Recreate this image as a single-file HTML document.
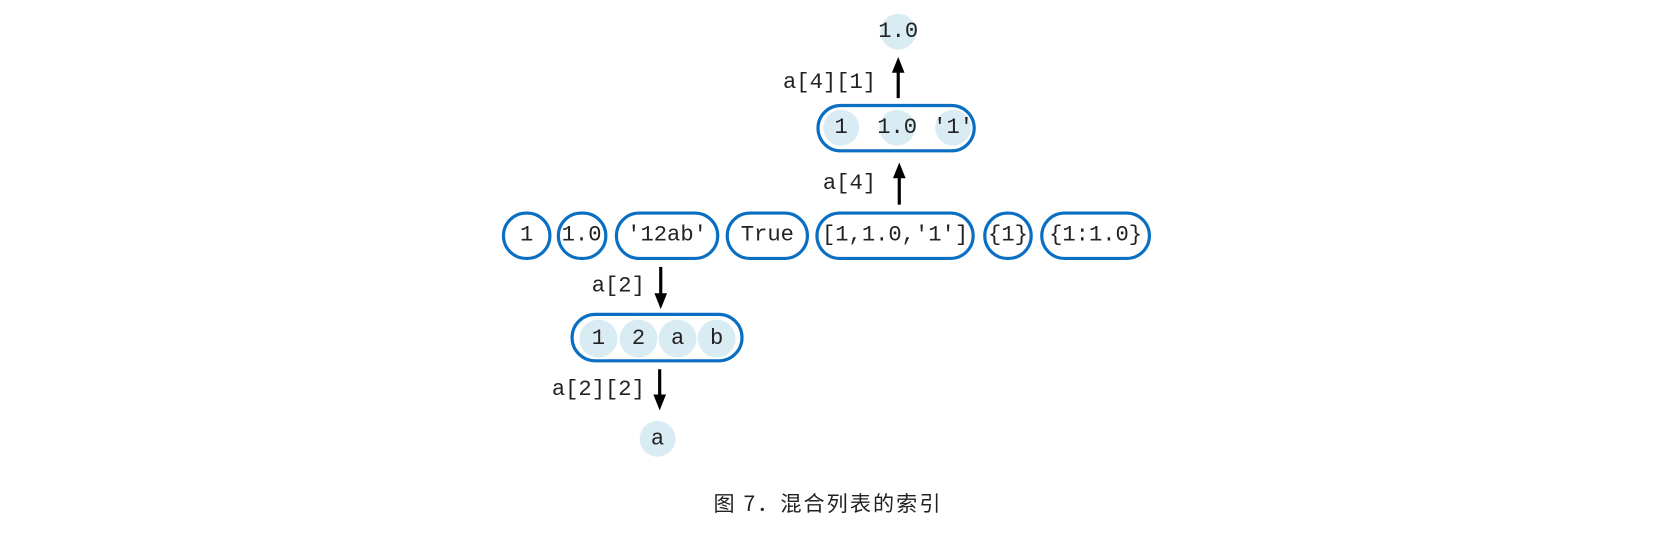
<!DOCTYPE html>
<html><head><meta charset="utf-8"><style>
html,body{margin:0;padding:0;background:#fff;width:1655px;height:538px;overflow:hidden}
svg{display:block}
.t{font-family:"Liberation Mono",monospace;font-size:21px;fill:#222;text-anchor:middle;dominant-baseline:central}
.l{font-family:"Liberation Mono",monospace;font-size:21px;fill:#222;text-anchor:end;dominant-baseline:central}
.p{fill:none;stroke:#0a6fc2;stroke-width:3}
.c{fill:#daecf3}
</style></head><body>
<svg width="1655" height="538" viewBox="0 0 1568 510" preserveAspectRatio="none" xmlns="http://www.w3.org/2000/svg">
<rect class="p" x="477" y="202" width="44" height="43" rx="21.5"/><text class="t" x="499" y="223">1</text>
<rect class="p" x="529" y="202" width="45" height="43" rx="21.5"/><text class="t" x="551" y="223">1.0</text>
<rect class="p" x="584" y="202" width="96" height="43" rx="21.5"/><text class="t" x="632" y="223">'12ab'</text>
<rect class="p" x="689" y="202" width="76" height="43" rx="21.5"/><text class="t" x="727" y="223">True</text>
<rect class="p" x="774" y="202" width="148" height="43" rx="21.5"/><text class="t" x="848" y="223">[1,1.0,'1']</text>
<rect class="p" x="933" y="202" width="44" height="43" rx="21.5"/><text class="t" x="955" y="223">{1}</text>
<rect class="p" x="987" y="202" width="102" height="43" rx="21.5"/><text class="t" x="1038" y="223">{1:1.0}</text>
<line x1="852" y1="194" x2="852" y2="168" stroke="#000" stroke-width="3"/>
<polygon points="846,169 858,169 852,154" fill="#000"/>
<text class="l" x="830" y="174">a[4]</text>
<rect class="p" x="775" y="100" width="148" height="43" rx="21.5"/>
<circle class="c" cx="797" cy="121" r="17"/><text class="t" x="797" y="121">1</text>
<circle class="c" cx="850" cy="121" r="17"/><text class="t" x="850" y="121">1.0</text>
<circle class="c" cx="903" cy="121" r="17"/><text class="t" x="903" y="121">'1'</text>
<line x1="851" y1="93" x2="851" y2="68" stroke="#000" stroke-width="3"/>
<polygon points="845,69 857,69 851,54" fill="#000"/>
<text class="l" x="830" y="78">a[4][1]</text>
<circle class="c" cx="851" cy="30" r="17"/><text class="t" x="851" y="30">1.0</text>
<line x1="626" y1="253" x2="626" y2="279" stroke="#000" stroke-width="3"/>
<polygon points="620,278 632,278 626,293" fill="#000"/>
<text class="l" x="611" y="271">a[2]</text>
<rect class="p" x="542" y="298" width="161" height="44" rx="22"/>
<circle class="c" cx="567" cy="321" r="18"/><text class="t" x="567" y="321">1</text>
<circle class="c" cx="605" cy="321" r="18"/><text class="t" x="605" y="321">2</text>
<circle class="c" cx="642" cy="321" r="18"/><text class="t" x="642" y="321">a</text>
<circle class="c" cx="679" cy="321" r="18"/><text class="t" x="679" y="321">b</text>
<line x1="625" y1="350" x2="625" y2="375" stroke="#000" stroke-width="3"/>
<polygon points="619,374 631,374 625,389" fill="#000"/>
<text class="l" x="611" y="369">a[2][2]</text>
<circle class="c" cx="623" cy="416" r="17"/><text class="t" x="623" y="416">a</text>
<text x="676" y="477" textLength="215" lengthAdjust="spacing" style="font-family:'Noto Sans CJK SC',sans-serif;font-size:20px;fill:#222;dominant-baseline:central">图 7．混合列表的索引</text>
</svg>
</body></html>
